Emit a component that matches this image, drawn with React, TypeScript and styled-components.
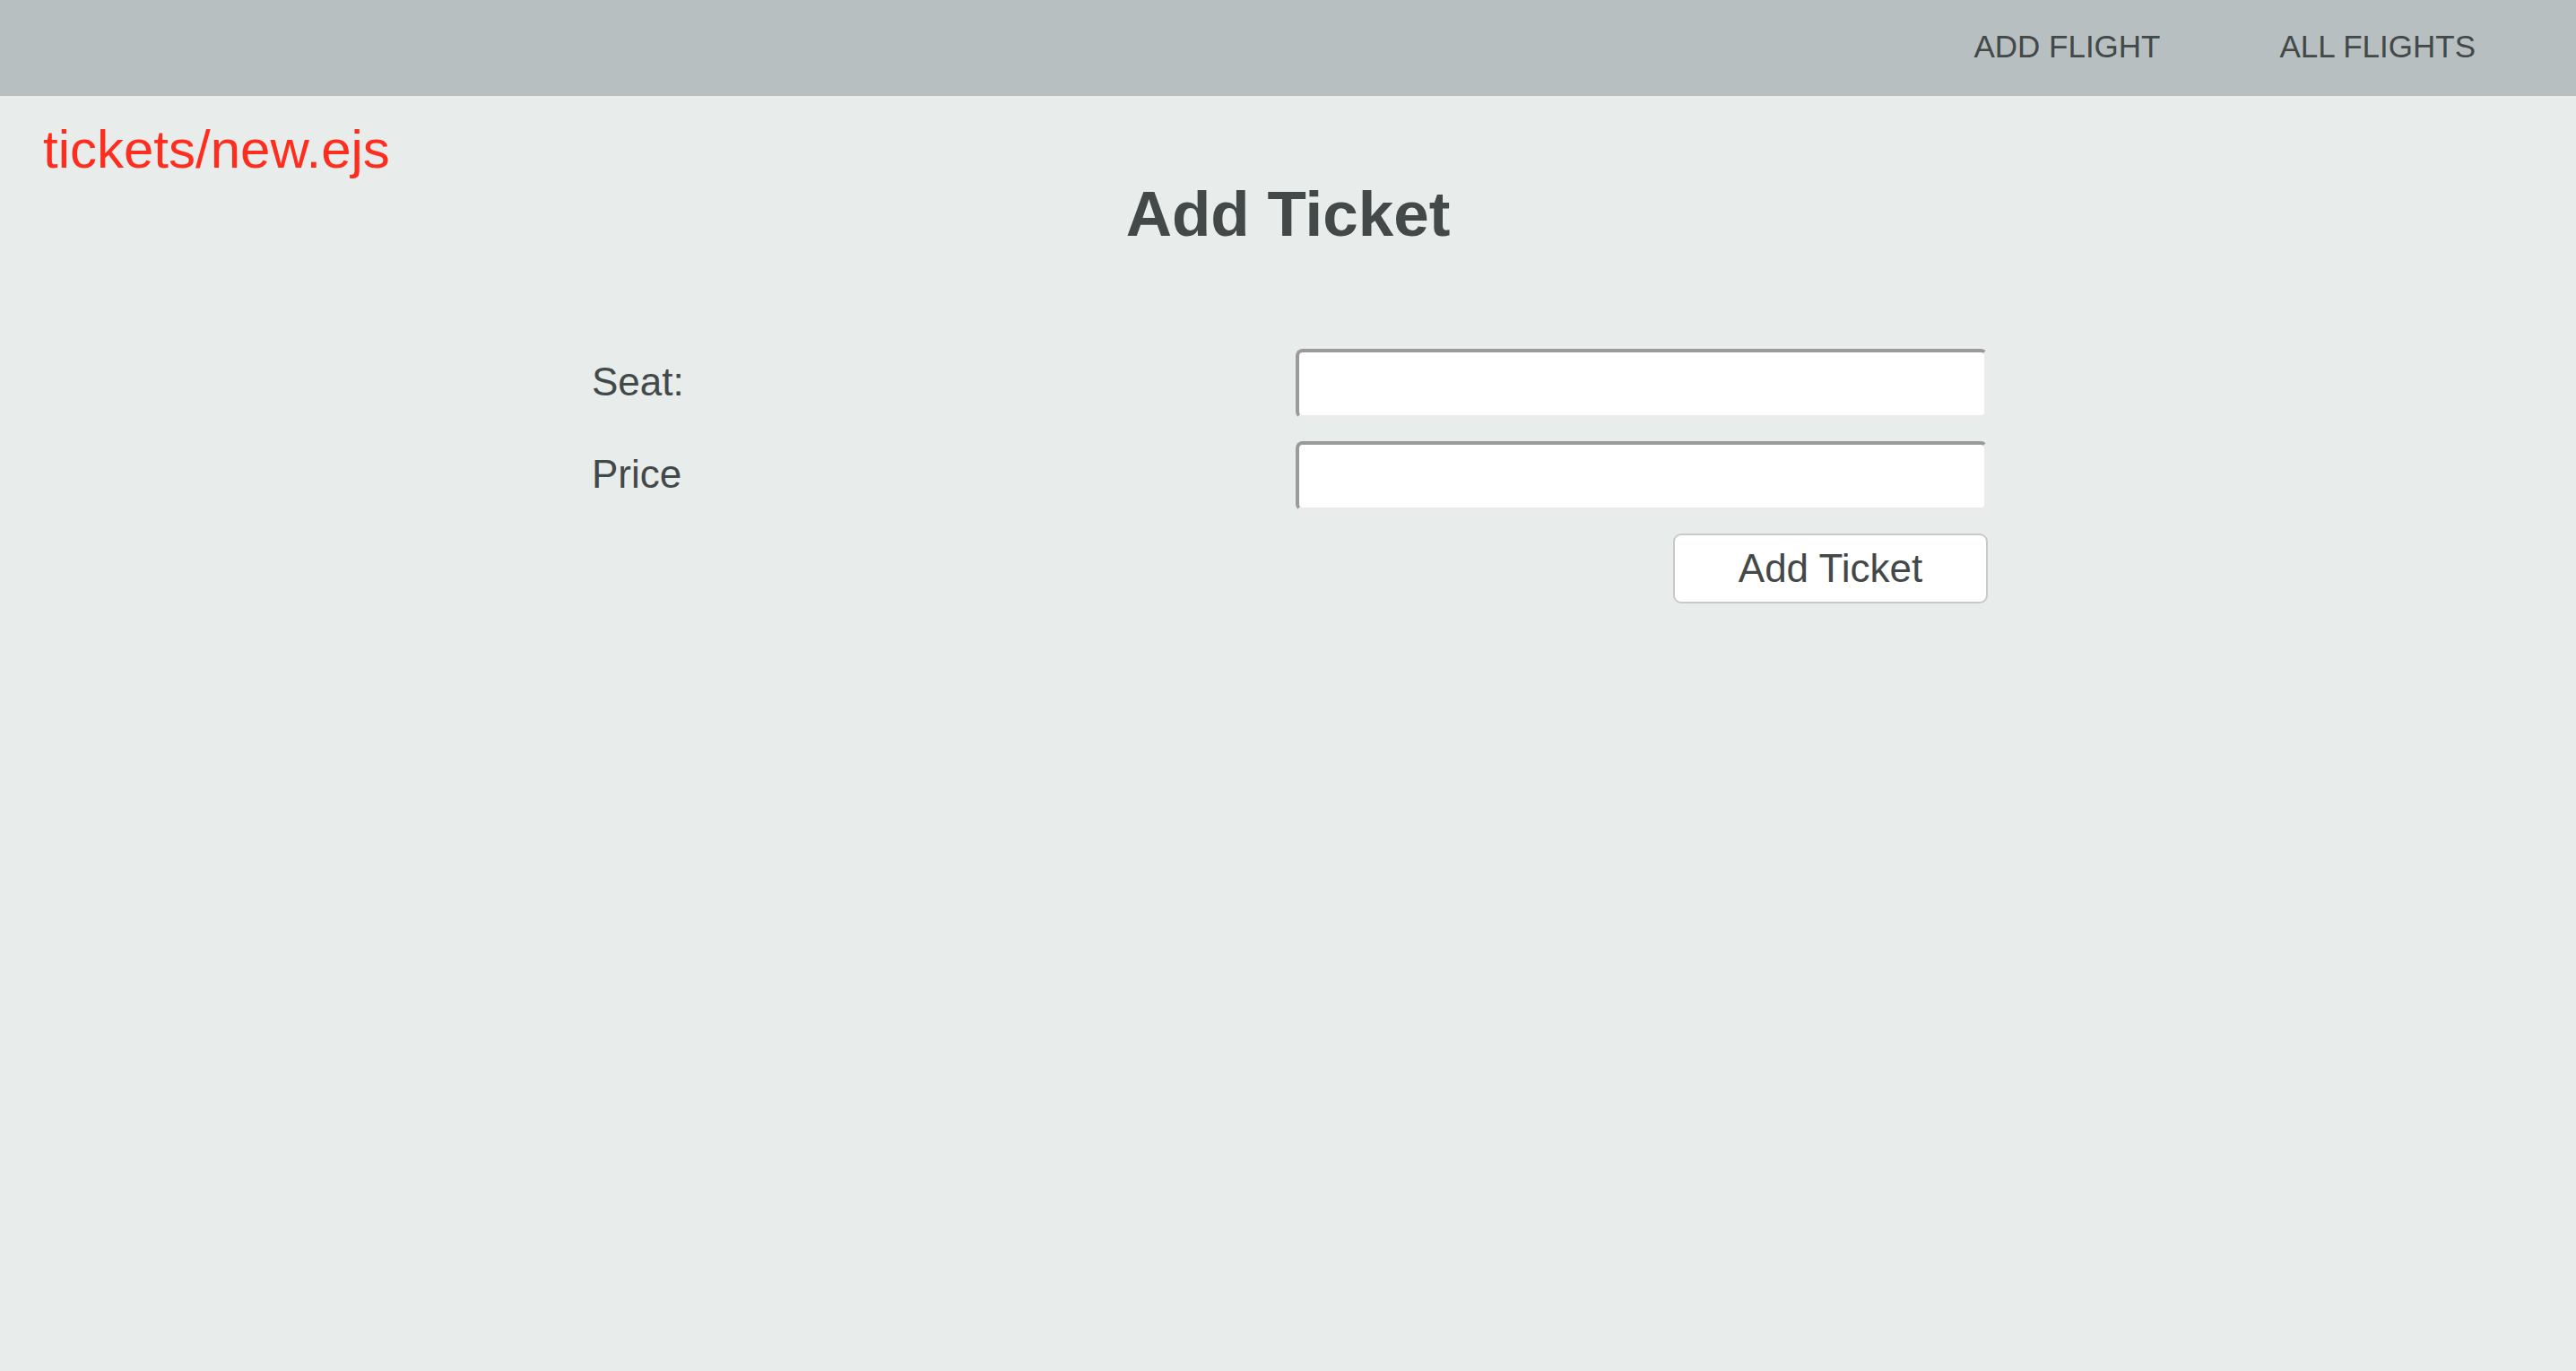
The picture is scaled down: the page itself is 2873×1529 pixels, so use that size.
import React from "react";
import styled, { createGlobalStyle } from "styled-components";

const Global = createGlobalStyle`
  html, body { margin: 0; padding: 0; }
  body {
    background: #e8eceb;
    font-family: "Liberation Sans", Arial, Helvetica, sans-serif;
    color: #434848;
  }
  * { box-sizing: border-box; }
`;

const Page = styled.div`
  min-height: 1529px;
  background: #e8eceb;
  display: flex;
  flex-direction: column;
`;

const NavBar = styled.nav`
  height: 107px;
  background: #b8bfc1;
  display: flex;
  justify-content: flex-end;
  align-items: center;
  padding-right: 112px;
  padding-bottom: 3px;
  gap: 133px;
`;

const NavLink = styled.a`
  font-size: 35px;
  color: #434848;
  text-decoration: none;
  letter-spacing: 0;
`;

const Main = styled.main`
  display: flex;
  flex-direction: column;
  padding-top: 28px;
`;

const FileName = styled.div`
  font-size: 60px;
  line-height: 64px;
  color: #fe2d1e;
  padding-left: 48px;
`;

const Heading = styled.h1`
  margin: 0;
  font-size: 71px;
  line-height: 80px;
  font-weight: 700;
  text-align: center;
  color: #434848;
`;

const Form = styled.form`
  align-self: center;
  width: 1557px;
  margin-top: 110px;
  margin-left: 4px;
  display: grid;
  grid-template-columns: 785px 772px;
  row-gap: 25px;
  align-items: center;
`;

const Label = styled.label`
  font-size: 44px;
  color: #434848;
  padding-bottom: 5px;
`;

const Input = styled.input`
  width: 772px;
  height: 78px;
  background: #fff;
  border-style: solid;
  border-width: 4px;
  border-color: #9a9a9a #ebebeb #ebebeb #9a9a9a;
  border-radius: 8px;
  font-size: 40px;
  font-family: inherit;
  padding: 0 12px;
  outline: none;
`;

const ButtonCell = styled.div`
  grid-column: 2;
  display: flex;
  justify-content: flex-end;
`;

const Button = styled.button`
  width: 351px;
  height: 78px;
  background: #fff;
  border: 2px solid #c9c9c9;
  border-radius: 9px;
  font-family: inherit;
  font-size: 44px;
  color: #434848;
  cursor: pointer;
`;

export default function App() {
  return (
    <>
      <Global />
      <Page>
        <NavBar>
          <NavLink href="#">ADD FLIGHT</NavLink>
          <NavLink href="#">ALL FLIGHTS</NavLink>
        </NavBar>
        <Main>
          <FileName>tickets/new.ejs</FileName>
          <Heading>Add Ticket</Heading>
          <Form onSubmit={(e) => e.preventDefault()}>
            <Label htmlFor="seat">Seat:</Label>
            <Input id="seat" type="text" />
            <Label htmlFor="price">Price</Label>
            <Input id="price" type="text" />
            <ButtonCell>
              <Button type="submit">Add Ticket</Button>
            </ButtonCell>
          </Form>
        </Main>
      </Page>
    </>
  );
}
